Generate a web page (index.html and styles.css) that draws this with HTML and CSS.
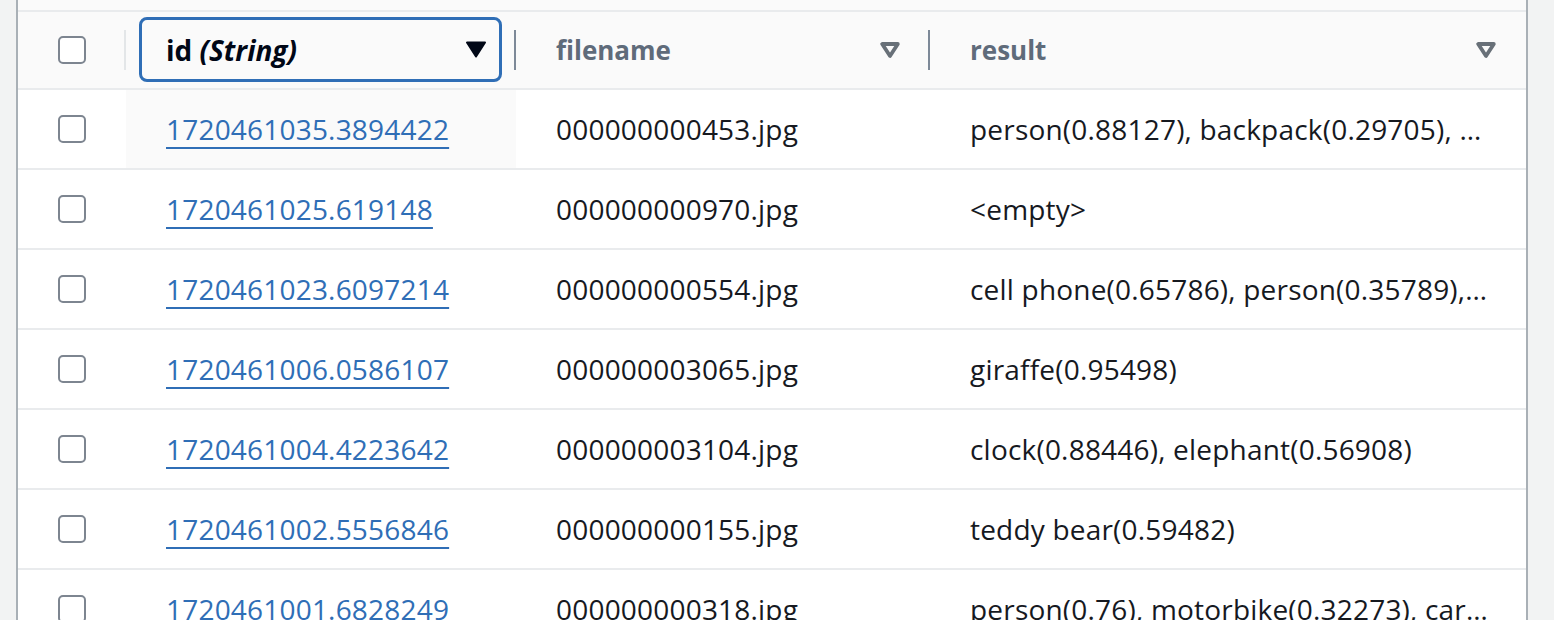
FILE: index.html
```html
<!DOCTYPE html>
<html>
<head>
<meta charset="utf-8">
<link rel="stylesheet" href="styles.css">
</head>
<body>
<div class="panel">
  <div class="top-strip"></div>
  <table class="grid">
    <colgroup>
      <col class="c-sel"><col class="c-id"><col class="c-file"><col class="c-res">
    </colgroup>
    <thead>
      <tr>
        <th class="sel-head"><span class="cb"></span><span class="divider light"></span></th>
        <th class="sort-head">
          <div class="sort-btn focused">
            <span class="label active">id <i>(String)</i></span>
            <svg class="sort-icon" width="22" height="17" viewBox="0 0 22 17"><polygon points="2,1.5 20,1.5 11,15.5" fill="#000716" stroke="#000716" stroke-width="2" stroke-linejoin="round"/></svg>
          </div>
          <span class="divider"></span>
        </th>
        <th class="sort-head">
          <div class="sort-btn">
            <span class="label">filename</span>
            <svg class="sort-icon" width="20" height="16" viewBox="0 0 20 16"><polygon points="2.2,2 17.8,2 10,14" fill="none" stroke="#687078" stroke-width="3.8" stroke-linejoin="round"/></svg>
          </div>
          <span class="divider"></span>
        </th>
        <th class="sort-head last">
          <div class="sort-btn">
            <span class="label">result</span>
            <svg class="sort-icon" width="20" height="16" viewBox="0 0 20 16"><polygon points="2.2,2 17.8,2 10,14" fill="none" stroke="#687078" stroke-width="3.8" stroke-linejoin="round"/></svg>
          </div>
        </th>
      </tr>
    </thead>
    <tbody>
      <tr>
        <td class="sel"><span class="cb"></span></td>
        <td class="id hover"><a href="#">1720461035.3894422</a></td>
        <td>000000000453.jpg</td>
        <td class="res">person(0.88127), backpack(0.29705), …</td>
      </tr>
      <tr>
        <td class="sel"><span class="cb"></span></td>
        <td class="id"><a href="#">1720461025.619148</a></td>
        <td>000000000970.jpg</td>
        <td class="res">&lt;empty&gt;</td>
      </tr>
      <tr>
        <td class="sel"><span class="cb"></span></td>
        <td class="id"><a href="#">1720461023.6097214</a></td>
        <td>000000000554.jpg</td>
        <td class="res">cell phone(0.65786), person(0.35789),…</td>
      </tr>
      <tr>
        <td class="sel"><span class="cb"></span></td>
        <td class="id"><a href="#">1720461006.0586107</a></td>
        <td>000000003065.jpg</td>
        <td class="res">giraffe(0.95498)</td>
      </tr>
      <tr>
        <td class="sel"><span class="cb"></span></td>
        <td class="id"><a href="#">1720461004.4223642</a></td>
        <td>000000003104.jpg</td>
        <td class="res">clock(0.88446), elephant(0.56908)</td>
      </tr>
      <tr>
        <td class="sel"><span class="cb"></span></td>
        <td class="id"><a href="#">1720461002.5556846</a></td>
        <td>000000000155.jpg</td>
        <td class="res">teddy bear(0.59482)</td>
      </tr>
      <tr>
        <td class="sel"><span class="cb"></span></td>
        <td class="id"><a href="#">1720461001.6828249</a></td>
        <td>000000000318.jpg</td>
        <td class="res">person(0.76), motorbike(0.32273), car…</td>
      </tr>
    </tbody>
  </table>
</div>
</body>
</html>
```

FILE: styles.css
```css
html, body {
  margin: 0;
  padding: 0;
  height: 620px;
  overflow: hidden;
  background: #f2f3f3;
  font-family: "Open Sans", "Noto Sans", sans-serif;
  font-size: 28px;
  letter-spacing: 0.2px;
  color: #16191f;
}

.panel {
  margin-left: 16px;
  width: 1508px;
  border-left: 2px solid #a9b0b6;
  border-right: 2px solid #a9b0b6;
  background: #ffffff;
}

.top-strip {
  height: 10px;
  background: #fafafa;
  border-bottom: 2px solid #e9ebed;
}

.grid {
  width: 1508px;
  table-layout: fixed;
  border-collapse: separate;
  border-spacing: 0;
}

.c-sel { width: 108px; }
.c-id { width: 390px; }
.c-file { width: 414px; }
.c-res { width: 596px; }

th {
  box-sizing: border-box;
  position: relative;
  height: 78px;
  padding: 0;
  background: #fafafa;
  border-bottom: 2px solid #e9ebed;
  text-align: left;
  font-weight: 700;
  vertical-align: middle;
}

.sel-head {
  padding-left: 40px;
}

.cb {
  display: block;
  width: 24px;
  height: 24px;
  border: 2px solid #7d8590;
  border-radius: 5px;
  background: #fff;
}

.divider {
  position: absolute;
  right: 0;
  top: 18px;
  width: 2px;
  height: 40px;
  background: #7d8998;
}

.divider.light {
  background: #e3e6e8;
}

.sort-head {
  padding: 5px 14px 6px 13px;
}

.sort-btn {
  box-sizing: border-box;
  height: 65px;
  display: flex;
  align-items: center;
  justify-content: space-between;
  padding: 0 13px 0 24px;
  border: 3px solid transparent;
  border-radius: 8px;
}

.sort-btn.focused {
  border-color: #2f6eb6;
  padding-right: 12px;
}

.label {
  color: #5f6b7a;
  white-space: nowrap;
  font-size: 26px;
  letter-spacing: 0;
}

.label.active {
  color: #000716;
  font-size: 28px;
}

.sort-icon {
  display: block;
  flex: none;
}

td {
  box-sizing: border-box;
  height: 80px;
  padding: 0 0 0 40px;
  border-bottom: 2px solid #e9ebed;
  white-space: nowrap;
  overflow: hidden;
  vertical-align: middle;
  line-height: 38px;
}

td.sel {
  padding-left: 40px;
}

td.hover {
  background: #fafafa;
}

td a {
  color: #2f6eb6;
  text-decoration: underline;
  text-decoration-thickness: 2px;
  text-underline-offset: 7px;
}

td.res {
  text-overflow: ellipsis;
}
```
